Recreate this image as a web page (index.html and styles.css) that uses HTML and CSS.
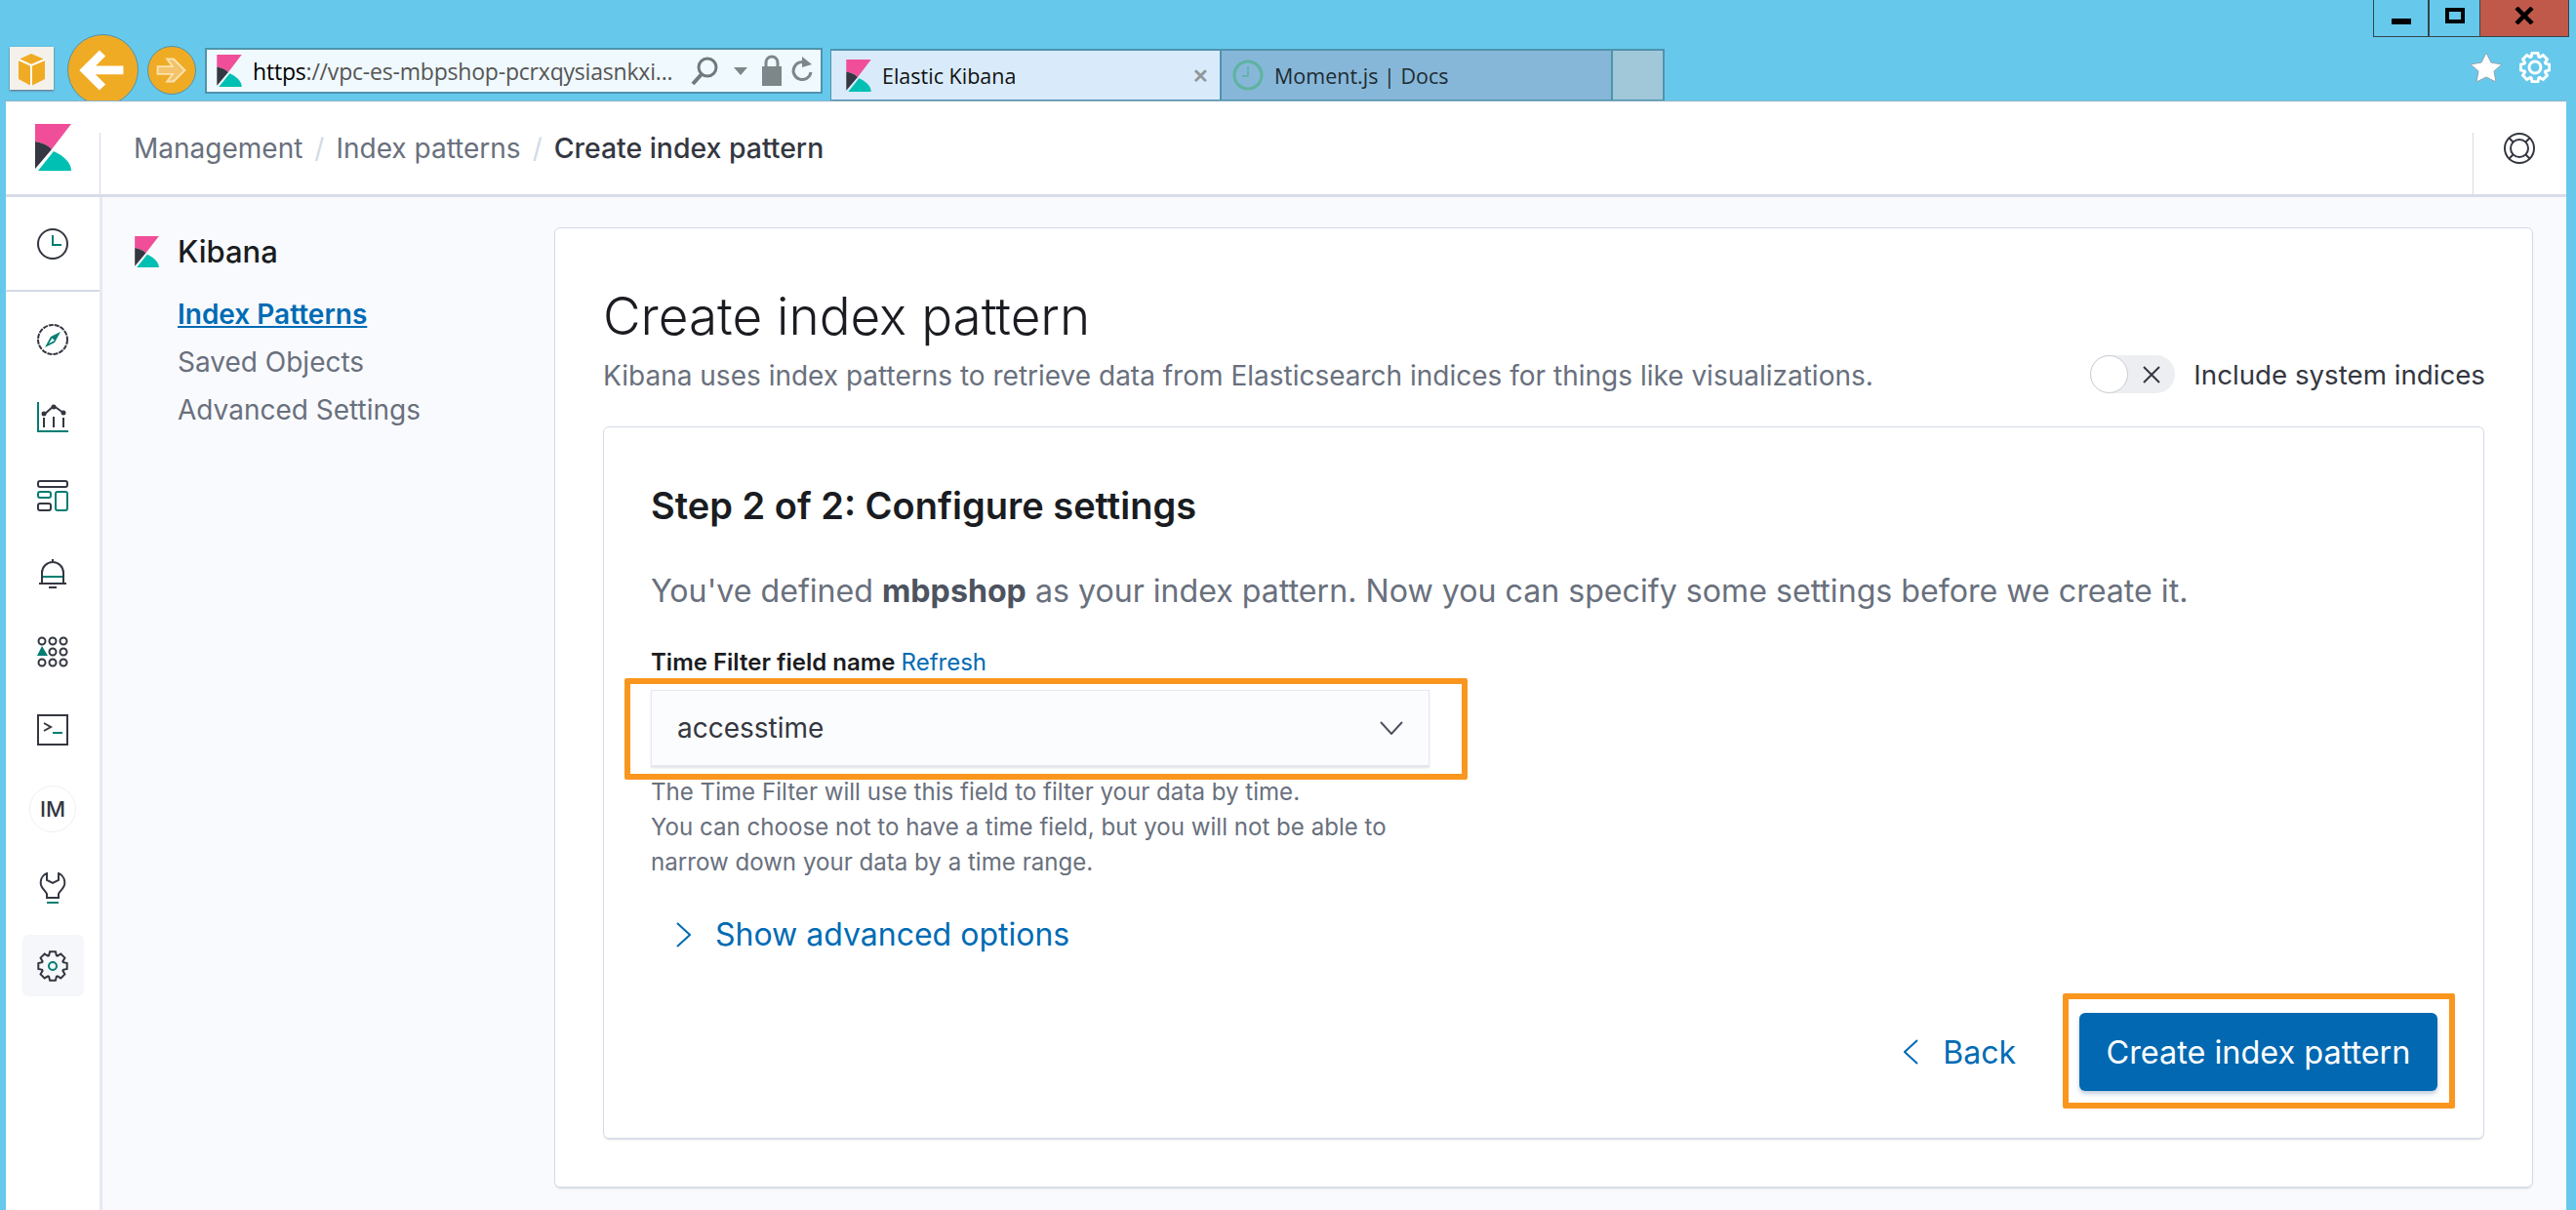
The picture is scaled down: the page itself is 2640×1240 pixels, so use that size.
FILE: index.html
```html
<!DOCTYPE html>
<html lang="en">
<head>
    <meta charset="UTF-8">
    <title>Elastic Kibana</title>
    <link rel="stylesheet" href="styles.css">
</head>
<body>
    <svg class="defs" width="0" height="0">
        <symbol id="logo" viewBox="0 0 37 48">
            <path fill="#f04e98" d="M0 0H37L17 26C12 21 6 19 0 18Z"/>
            <path fill="#343741" d="M0 18C6 19 12 21 17 26L0 46Z"/>
            <path fill="#00bfb3" d="M3 48L19 28C30 33 37 40 37 48Z"/>
        </symbol>
        <symbol id="cog" viewBox="0 0 32 32">
            <path d="M12.100 5.200L13.100 1.300H18.900L19.900 5.200L20.880 5.610L24.340 3.560L28.440 7.660L26.390 11.120L26.800 12.100L30.700 13.100V18.900L26.800 19.900L26.390 20.880L28.440 24.340L24.340 28.440L20.880 26.390L19.900 26.800L18.900 30.700H13.100L12.100 26.800L11.120 26.390L7.660 28.440L3.560 24.340L5.610 20.880L5.200 19.900L1.300 18.900V13.100L5.200 12.100L5.610 11.120L3.560 7.660L7.660 3.560L11.120 5.610Z"/>
        </symbol>
    </svg>

    <div class="chrome">
        <div class="home">
            <svg viewBox="0 0 45 44" width="45" height="44">
                <path fill="#f0ab24" d="M9 13L22 7L36 13V33L22 40L9 33Z"/>
                <path fill="none" stroke="#fff" stroke-width="2" d="M9 13L22 19L36 13M22 19V40"/>
            </svg>
        </div>
        <div class="nav-btn back">
            <svg viewBox="0 0 73 73" width="73" height="73">
                <path fill="none" stroke="#fff" stroke-width="9" d="M58 37H20M36 19L18 37L36 55"/>
            </svg>
        </div>
        <div class="nav-btn forward">
            <svg viewBox="0 0 50 50" width="50" height="50">
                <path fill="#f3c26a" stroke="#fbe2ae" stroke-width="2" d="M10 21H26L20 13H27L39 25L27 37H20L26 29H10Z"/>
            </svg>
        </div>
        <div class="address">
            <svg class="favicon"><use href="#logo"/></svg>
            <span class="url"><b>https</b>://vpc-es-mbpshop-pcrxqysiasnkxi...</span>
            <svg class="addr-icons" viewBox="0 0 130 34" width="130" height="34">
                <circle cx="18" cy="13" r="9" fill="none" stroke="#6f7a7d" stroke-width="3"/>
                <path stroke="#6f7a7d" stroke-width="4" d="M12 20L3 30"/>
                <path fill="#7d8689" d="M45 13H59L52 21Z"/>
                <path fill="none" stroke="#7d8689" stroke-width="3" d="M78 12V8A6 6 0 0 1 90 8V12"/>
                <rect x="74" y="12" width="20" height="20" fill="#7d8689"/>
                <path fill="none" stroke="#7d8689" stroke-width="3" d="M120 9A9 9 0 1 0 124 18"/>
                <path fill="#7d8689" d="M115 2L125 10L115 13Z"/>
            </svg>
        </div>
        <div class="tab tab-active">
            <svg class="favicon"><use href="#logo"/></svg>
            <span class="tab-title">Elastic Kibana</span>
            <span class="tab-close">✕</span>
        </div>
        <div class="tab tab-other">
            <svg class="clock-fav" viewBox="0 0 32 32" width="32" height="32">
                <circle cx="16" cy="16" r="14" fill="none" stroke="#5eb39f" stroke-width="3"/>
                <path fill="none" stroke="#5eb39f" stroke-width="1.5" d="M16 7V17H10"/>
            </svg>
            <span class="tab-title">Moment.js | Docs</span>
        </div>
        <div class="tab-new"></div>

        <div class="window-side">
            <div class="win-controls">
                <div class="win-btn win-min"><span class="min-bar"></span></div>
                <div class="win-btn win-max"><span class="max-box"></span></div>
                <div class="win-btn win-close">
                    <svg viewBox="0 0 20 18" width="20" height="18"><path stroke="#000" stroke-width="4.5" d="M2 1L18 17M18 1L2 17"/></svg>
                </div>
            </div>
            <div class="browser-tools">
                <svg viewBox="0 0 34 32" width="34" height="32">
                    <path fill="#fff" stroke="#8aa4b0" stroke-width="1" d="M17 1L22 11L33 13L25 20L27 31L17 26L7 31L9 20L1 13L12 11Z"/>
                </svg>
                <svg class="tool-cog" viewBox="0 0 32 32" width="32" height="32">
                    <use href="#cog"/>
                    <circle cx="16" cy="16" r="6" fill="none" stroke="#fff" stroke-width="3"/>
                </svg>
            </div>
        </div>
    </div>

    <div class="kibana">
        <header class="topbar">
            <div class="logo-cell">
                <svg class="logo"><use href="#logo"/></svg>
            </div>
            <nav class="crumbs">
                <span>Management</span>
                <i>/</i>
                <span>Index patterns</span>
                <i>/</i>
                <span class="crumb-last">Create index pattern</span>
            </nav>
            <div class="help-cell">
                <svg viewBox="0 0 32 32" width="32" height="32" fill="none" stroke="#343741" stroke-width="2">
                    <circle cx="16" cy="16" r="15"/>
                    <circle cx="16" cy="16" r="9"/>
                    <path d="M5 5L10 10M27 5L22 10M5 27L10 22M27 27L22 22"/>
                </svg>
            </div>
        </header>

        <div class="main">
            <aside class="sidebar">
                <div class="side-top">
                    <svg class="side-icon" viewBox="0 0 32 32">
                        <circle class="ln" cx="16" cy="16" r="15"/>
                        <path class="tl" stroke-width="3" d="M16 7V17H25"/>
                    </svg>
                </div>
                <div class="side-list">
                    <svg class="side-icon" viewBox="0 0 32 32">
                        <circle class="ln" cx="16" cy="16" r="15" stroke-dasharray="5 1"/>
                        <path fill="#017d73" d="M24 8L18 19L8 24L14 13ZM15.500 14.500L12 20L18 17Z"/>
                    </svg>
                    <svg class="side-icon" viewBox="0 0 32 32">
                        <path class="tl" d="M1 0V30H32"/>
                        <path class="ln" d="M7 13L17 4L27 11M7 16V26M17 15V26M27 16V26"/>
                        <circle cx="7" cy="12" r="2.500" fill="#343741"/>
                        <circle cx="17" cy="5" r="2.500" fill="#343741"/>
                        <circle cx="27" cy="11" r="2.500" fill="#343741"/>
                    </svg>
                    <svg class="side-icon" viewBox="0 0 32 32">
                        <rect class="ln" x="1" y="1" width="30" height="6" rx="2"/>
                        <rect class="tl" x="1" y="12" width="13" height="6" rx="2"/>
                        <rect class="ln" x="1" y="24" width="13" height="7" rx="2"/>
                        <rect class="tl" x="19" y="12" width="12" height="19" rx="2"/>
                    </svg>
                    <svg class="side-icon" viewBox="0 0 32 32">
                        <path class="ln" d="M16 1V4M5 26V15A11 11 0 0 1 27 15V26ZM2 26H30M12 30H20"/>
                        <path class="tl" d="M6 19H26"/>
                    </svg>
                    <svg class="side-icon" viewBox="0 0 32 32">
                        <g class="ln">
                            <circle cx="5" cy="5" r="3.500"/><circle cx="16" cy="5" r="3.500"/><circle cx="27" cy="5" r="3.500"/>
                            <circle cx="16" cy="16" r="3.500"/><circle cx="27" cy="16" r="3.500"/>
                            <circle cx="5" cy="27" r="3.500"/><circle cx="16" cy="27" r="3.500"/><circle cx="27" cy="27" r="3.500"/>
                        </g>
                        <path fill="#017d73" d="M5 10L11 20H0Z"/>
                    </svg>
                    <svg class="side-icon" viewBox="0 0 32 32">
                        <rect class="ln" x="1" y="1" width="30" height="30"/>
                        <path class="ln" d="M7 9L14 13L7 17"/>
                        <path class="tl" d="M16 19H26"/>
                    </svg>
                    <div class="avatar">IM</div>
                    <svg class="side-icon" viewBox="0 0 32 32">
                        <path class="ln" d="M10 1C5 3 3 8 4 13C5 17 9 19 10 22V26H22V22C23 19 27 17 28 13C29 8 27 3 22 1V8L16 11L10 8Z"/>
                        <path class="tl" stroke-width="3" d="M10 31H22"/>
                    </svg>
                    <div class="side-active">
                        <svg class="side-icon side-cog" viewBox="0 0 32 32">
                            <use href="#cog"/>
                            <circle class="tl" stroke-width="3" cx="16" cy="16" r="4"/>
                        </svg>
                    </div>
                </div>
            </aside>

            <div class="submenu">
                <div class="submenu-head">
                    <svg class="submenu-logo"><use href="#logo"/></svg>
                    <span>Kibana</span>
                </div>
                <a class="submenu-item selected">Index Patterns</a>
                <a class="submenu-item">Saved Objects</a>
                <a class="submenu-item">Advanced Settings</a>
            </div>

            <section class="panel">
                <div class="panel-head">
                    <div>
                        <h1>Create index pattern</h1>
                        <p class="subtitle">Kibana uses index patterns to retrieve data from Elasticsearch indices for things like visualizations.</p>
                    </div>
                    <div class="switch-row">
                        <span class="switch">
                            <span class="knob"></span>
                            <svg viewBox="0 0 18 18" width="18" height="18"><path stroke="#343741" stroke-width="2" d="M1 1L17 17M17 1L1 17"/></svg>
                        </span>
                        <span>Include system indices</span>
                    </div>
                </div>

                <div class="card">
                    <h2>Step 2 of 2: Configure settings</h2>
                    <p class="lead">You've defined <b>mbpshop</b> as your index pattern. Now you can specify some settings before we create it.</p>
                    <label class="field-label">Time Filter field name <a>Refresh</a></label>
                    <div class="select">
                        <span>accesstime</span>
                        <svg viewBox="0 0 24 14" width="24" height="14"><path fill="none" stroke="#4d5360" stroke-width="2" d="M1 1L12 13L23 1"/></svg>
                        <div class="callout callout-select"></div>
                    </div>
                    <p class="help">The Time Filter will use this field to filter your data by time.<br>You can choose not to have a time field, but you will not be able to<br>narrow down your data by a time range.</p>
                    <a class="advanced">
                        <svg viewBox="0 0 15 26" width="15" height="26"><path fill="none" stroke="#006bb4" stroke-width="2" d="M1 1L14 13L1 25"/></svg>
                        Show advanced options
                    </a>
                    <div class="card-foot">
                        <a class="back-link">
                            <svg viewBox="0 0 15 26" width="15" height="26"><path fill="none" stroke="#006bb4" stroke-width="2" d="M14 1L1 13L14 25"/></svg>
                            Back
                        </a>
                        <button class="primary">
                            Create index pattern
                            <div class="callout callout-button"></div>
                        </button>
                    </div>
                </div>
            </section>
        </div>
    </div>
</body>
</html>
```

FILE: styles.css
```css
body{
    margin: 0;
    width: 2640px;
    height: 1240px;
    overflow: hidden;
    display: flex;
    flex-direction: column;
    background-color: #66c9ec;
    font-family: Inter, "Liberation Sans", sans-serif;
    color: #343741;
}
.defs{
    position: absolute;
}
a{
    color: #006bb4;
}

/* browser frame */
.chrome{
    height: 104px;
    flex-shrink: 0;
    display: flex;
    align-items: flex-start;
    padding-left: 10px;
    overflow: hidden;
    font-family: "Open Sans", "Noto Sans", sans-serif;
}
.home{
    width: 45px;
    height: 44px;
    margin-top: 48px;
    background-color: #f4f1ea;
    box-shadow: 0 1px 2px #667;
}
.nav-btn{
    background-color: #f0ab24;
    border: 1px solid #4f93ad;
    border-radius: 50%;
    box-sizing: border-box;
    display: flex;
    align-items: center;
    justify-content: center;
}
.back{
    width: 73px;
    height: 73px;
    margin: 35px 0 0 14px;
}
.forward{
    width: 50px;
    height: 50px;
    margin: 47px 0 0 9px;
}
.address{
    width: 633px;
    height: 47px;
    box-sizing: border-box;
    margin: 49px 0 0 9px;
    padding-left: 10px;
    display: flex;
    align-items: center;
    background-color: #f0f9fd;
    border: 2px solid #4f93ad;
}
.favicon{
    width: 26px;
    height: 33px;
    flex-shrink: 0;
}
.url{
    margin-left: 11px;
    flex: 1;
    font-size: 23px;
    letter-spacing: -0.2px;
    color: #555;
    white-space: nowrap;
}
.url b{
    font-weight: 400;
    color: #000;
}
.addr-icons{
    margin-right: 4px;
    flex-shrink: 0;
}
.tab{
    height: 54px;
    box-sizing: border-box;
    margin-top: 50px;
    display: flex;
    align-items: center;
    border: 2px solid #4f93ad;
    border-left-width: 1px;
    border-right-width: 1px;
    font-size: 21.5px;
    color: #111;
}
.tab-active{
    width: 400px;
    margin-left: 8px;
    padding: 0 11px 0 15px;
    background-color: #d9ebfa;
}
.tab-other{
    width: 401px;
    padding-left: 11px;
    background-color: #87b7d8;
    color: #1d2b33;
}
.tab-new{
    width: 54px;
    height: 54px;
    box-sizing: border-box;
    margin-top: 50px;
    background-color: #a1c8d8;
    border: 2px solid #4f93ad;
    border-left-width: 1px;
}
.tab-title{
    margin-left: 11px;
    flex: 1;
}
.clock-fav{
    flex-shrink: 0;
}
.tab-close{
    font-size: 20px;
    font-weight: 700;
    color: #8f979b;
}
.window-side{
    margin-left: auto;
    margin-right: 7px;
    width: 201px;
}
.win-controls{
    display: flex;
    height: 38px;
    box-sizing: border-box;
    border: 1px solid #33454d;
    border-top: 0;
}
.win-btn{
    display: flex;
    align-items: center;
    justify-content: center;
}
.win-min{
    width: 55px;
    border-right: 2px solid #33454d;
}
.win-max{
    width: 51px;
}
.win-close{
    flex: 1;
    background-color: #c1594a;
    border-left: 1px solid #33454d;
    padding-bottom: 6px;
}
.min-bar{
    width: 20px;
    height: 6px;
    margin-top: 6px;
    background-color: #000;
}
.max-box{
    width: 20px;
    height: 16px;
    margin-bottom: 6px;
    box-sizing: border-box;
    border: 4px solid #000;
}
.browser-tools{
    display: flex;
    align-items: center;
    gap: 17px;
    margin: 15px 0 0 99px;
}
.tool-cog use{
    fill: none;
    stroke: #fff;
    stroke-width: 3;
}

/* kibana */
.kibana{
    flex: 1;
    margin: 0 10px 0 6px;
    display: flex;
    flex-direction: column;
    background-color: #f9fafd;
    box-shadow: 0 -1px 0 #8fb0c6;
}
.topbar{
    height: 98px;
    box-sizing: border-box;
    flex-shrink: 0;
    display: flex;
    background-color: #fff;
    border-bottom: 3px solid #d8dce8;
}
.logo-cell{
    width: 97px;
    box-sizing: border-box;
    margin-top: 32px;
    padding: 0 0 0 30px;
    border-right: 1px solid #d3dae6;
}
.logo-cell .logo{
    width: 37px;
    height: 48px;
    margin-top: -9px;
}
.crumbs{
    flex: 1;
    display: flex;
    align-items: center;
    gap: 12px;
    padding-left: 34px;
    font-size: 28px;
    color: #69707d;
}
.crumbs i{
    font-style: normal;
    color: #d3dae6;
}
.crumb-last{
    font-size: 28.4px;
    color: #343741;
    font-weight: 500;
}
.help-cell{
    width: 96px;
    margin-top: 32px;
    box-sizing: border-box;
    border-left: 1px solid #d3dae6;
    padding: 0 0 0 31px;
}
.main{
    flex: 1;
    display: flex;
    min-height: 0;
}
.sidebar{
    width: 99px;
    box-sizing: border-box;
    flex-shrink: 0;
    background-color: #fff;
    border-right: 3px solid #e6e9f2;
}
.side-top{
    height: 97px;
    box-sizing: border-box;
    padding-top: 32px;
    display: flex;
    justify-content: center;
    border-bottom: 2px solid #d3dae6;
}
.side-list{
    display: flex;
    flex-direction: column;
    align-items: center;
    gap: 48px;
    padding-top: 33px;
}
.side-icon{
    width: 32px;
    height: 32px;
    display: block;
    flex-shrink: 0;
}
.side-cog use{
    fill: none;
    stroke: #343741;
    stroke-width: 2;
}
.ln{
    fill: none;
    stroke: #343741;
    stroke-width: 2;
}
.tl{
    fill: none;
    stroke: #017d73;
    stroke-width: 2;
}
.avatar{
    width: 46px;
    height: 46px;
    margin: -7px 0;
    border-radius: 50%;
    border: 1px solid #eef0f4;
    display: flex;
    align-items: center;
    justify-content: center;
    font-size: 22px;
    font-weight: 500;
}
.side-active{
    width: 63px;
    height: 63px;
    margin: -16px 0;
    border-radius: 6px;
    background-color: #f5f7fa;
    display: flex;
    align-items: center;
    justify-content: center;
}
.submenu{
    width: 463px;
    box-sizing: border-box;
    flex-shrink: 0;
    padding: 37px 0 0 33px;
}
.submenu-head{
    display: flex;
    align-items: center;
    gap: 19px;
    font-size: 31px;
    font-weight: 500;
    color: #1a1c21;
    margin-bottom: 28px;
}
.submenu-logo{
    width: 25px;
    height: 32px;
}
.submenu-item{
    display: block;
    width: fit-content;
    margin-left: 44px;
    margin-bottom: 12px;
    font-size: 28px;
    line-height: 37px;
    color: #69707d;
}
.selected{
    color: #006bb4;
    font-weight: 600;
    text-decoration: underline;
}
.panel{
    width: 2028px;
    height: 984px;
    box-sizing: border-box;
    margin-top: 31px;
    padding: 56px 49px 50px;
    background-color: #fff;
    border: 1px solid #d3dae6;
    border-radius: 6px;
    box-shadow: 0 2px 2px -1px rgba(152, 162, 179, 0.4);
}
.panel-head{
    display: flex;
    justify-content: space-between;
    align-items: flex-end;
    margin-bottom: 34px;
}
h1{
    margin: 0 0 9px 0;
    font-size: 53px;
    line-height: 68px;
    font-weight: 300;
    color: #1a1c21;
}
.subtitle{
    margin: 0;
    font-size: 28px;
    line-height: 36px;
    color: #69707d;
}
.switch-row{
    display: flex;
    align-items: center;
    gap: 19px;
    margin-right: -1px;
    font-size: 27.7px;
    line-height: 36px;
}
.switch{
    position: relative;
    width: 87px;
    height: 39px;
    border-radius: 20px;
    background-color: #eceef2;
    display: flex;
    align-items: center;
    justify-content: flex-end;
    padding-right: 15px;
    box-sizing: border-box;
}
.knob{
    position: absolute;
    left: 0;
    top: 0;
    width: 39px;
    height: 39px;
    box-sizing: border-box;
    border-radius: 50%;
    background-color: #fff;
    border: 1px solid #c8ccd4;
}
.card{
    height: 730px;
    box-sizing: border-box;
    padding: 58px 47px 49px 48px;
    background-color: #fff;
    border: 1px solid #d3dae6;
    border-radius: 6px;
    box-shadow: 0 2px 2px -1px rgba(152, 162, 179, 0.4);
}
h2{
    margin: 0 0 46px 0;
    font-size: 38px;
    line-height: 44px;
    font-weight: 600;
    color: #1a1c21;
}
.lead{
    margin: 0 0 38px 0;
    font-size: 32.15px;
    line-height: 40px;
    color: #69707d;
}
.lead b{
    font-weight: 700;
    color: #4d5360;
}
.field-label{
    display: block;
    font-size: 24px;
    line-height: 30px;
    font-weight: 600;
    color: #1a1c21;
}
.field-label a{
    font-weight: 400;
}
.select{
    position: relative;
    width: 798px;
    height: 78px;
    box-sizing: border-box;
    margin-top: 13px;
    padding: 0 26px 0 26px;
    display: flex;
    align-items: center;
    justify-content: space-between;
    font-size: 28px;
    background-color: #fbfcfd;
    border: 1px solid #e7e9f2;
    box-shadow: 0 2px 2px rgba(152, 162, 179, 0.3);
}
.callout{
    position: absolute;
    box-sizing: border-box;
    border: 6px solid #fa961e;
    border-radius: 2px;
}
.callout-select{
    left: -28px;
    right: -40px;
    top: -13px;
    bottom: -15px;
}
.callout-button{
    left: -17px;
    right: -18px;
    top: -20px;
    bottom: -18px;
}
.help{
    margin: 9px 0 0 0;
    font-size: 24.1px;
    line-height: 36px;
    color: #69707d;
}
.advanced{
    display: flex;
    align-items: center;
    gap: 25px;
    margin: 36px 0 0 26px;
    font-size: 32px;
    line-height: 40px;
}
.card-foot{
    display: flex;
    align-items: center;
    justify-content: flex-end;
    margin-top: 60px;
}
.back-link{
    display: flex;
    align-items: center;
    gap: 25px;
    margin-right: 65px;
    font-size: 32px;
}
.primary{
    position: relative;
    width: 367px;
    height: 80px;
    background-color: #0268b1;
    color: #fff;
    border: 0;
    border-radius: 6px;
    font-family: Inter, "Liberation Sans", sans-serif;
    font-size: 32.4px;
    font-weight: 400;
    box-shadow: 0 3px 4px rgba(0, 60, 120, 0.25);
}
```
